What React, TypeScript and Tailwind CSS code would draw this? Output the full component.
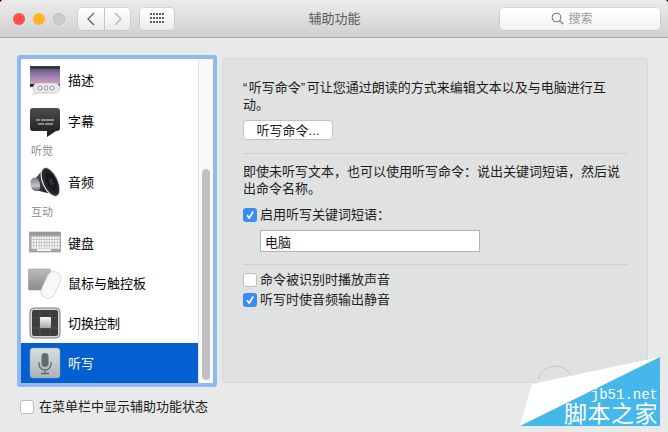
import React from "react";

const font = { fontFamily: '"Liberation Sans","Noto Sans CJK SC",sans-serif' };

function DescIcon() {
  return (
    <svg width="32" height="30" viewBox="0 0 32 30">
      <defs>
        <linearGradient id="dg" x1="0" y1="0" x2="0" y2="1">
          <stop offset="0" stopColor="#5d5a86" />
          <stop offset="0.5" stopColor="#a886b4" />
          <stop offset="1" stopColor="#e0a0b4" />
        </linearGradient>
      </defs>
      <rect x="1" y="1" width="30" height="4" fill="#3a3a3c" />
      <rect x="1" y="4" width="30" height="17" fill="url(#dg)" />
      <rect x="1" y="19" width="30" height="3" fill="#2e2e30" />
      <path d="M9 18h17a5 5 0 0 1 0 10H9l-5 1.500 1.500-3A5 5 0 0 1 9 18z" fill="#e9e9ea" stroke="#b5b5b8" strokeWidth="0.6" />
      <circle cx="11" cy="23" r="2" fill="#fff" stroke="#8d8d92" />
      <circle cx="17" cy="23" r="2" fill="#fff" stroke="#8d8d92" />
      <circle cx="23" cy="23" r="2" fill="#fff" stroke="#8d8d92" />
    </svg>
  );
}

function CaptionIcon() {
  return (
    <svg width="32" height="32" viewBox="0 0 32 32">
      <defs>
        <linearGradient id="cg" x1="0" y1="0" x2="0" y2="1">
          <stop offset="0" stopColor="#4c4c4e" />
          <stop offset="1" stopColor="#1b1b1d" />
        </linearGradient>
      </defs>
      <path d="M4 3h24a3 3 0 0 1 3 3v17a3 3 0 0 1-3 3h-1l-9 6v-6H4a3 3 0 0 1-3-3V6a3 3 0 0 1 3-3z" fill="url(#cg)" />
      <path d="M7 15h4M12 15h13M9 19h6M16 19h8" stroke="#e2e2e2" strokeWidth="1" />
    </svg>
  );
}

function SpeakerIcon() {
  return (
    <svg width="32" height="32" viewBox="0 0 32 32">
      <defs>
        <radialGradient id="sg" cx="0.55" cy="0.5" r="0.6">
          <stop offset="0" stopColor="#3a3c44" />
          <stop offset="0.35" stopColor="#141418" />
          <stop offset="0.8" stopColor="#2c2e35" />
          <stop offset="1" stopColor="#565861" />
        </radialGradient>
        <linearGradient id="sb" x1="0" y1="0" x2="1" y2="1">
          <stop offset="0" stopColor="#55565c" />
          <stop offset="1" stopColor="#111114" />
        </linearGradient>
        <linearGradient id="sm" x1="0" y1="0" x2="0" y2="1">
          <stop offset="0" stopColor="#7c7e84" />
          <stop offset="0.6" stopColor="#c2c3c8" />
          <stop offset="1" stopColor="#5f6066" />
        </linearGradient>
      </defs>
      <path d="M6 13 15 2l13 27-14-3-7-2z" fill="url(#sb)" />
      <path d="M4 12c2-1 5 0 6 3 1.500 3 1.500 7 0 9-1 1.500-4 1.500-6 0-2-2-3-5-2.500-8 .2-2 1.300-3.500 2.500-4z" fill="url(#sm)" />
      <ellipse cx="21.500" cy="16" rx="7.500" ry="15.500" transform="rotate(-25 21.500 16)" fill="url(#sg)" stroke="#e6e6ea" strokeWidth="1.100" />
    </svg>
  );
}

function KeyboardIcon() {
  const keys = [];
  for (let r = 0; r < 4; r++) {
    for (let c = 0; c < 11; c++) {
      keys.push(<rect key={`${r}-${c}`} x={2.5 + c * 2.6} y={5.5 + r * 3.2} width="2.200" height="2.700" fill="#f4f4f4" />);
    }
  }
  return (
    <svg width="32" height="24" viewBox="0 0 32 24">
      <rect x="0.500" y="1" width="31" height="20" fill="#a6a6a8" stroke="#8a8a8c" strokeWidth="0.6" />
      <rect x="1" y="1" width="30" height="3" fill="#98989a" />
      {keys}
      <rect x="8" y="18" width="14" height="2" fill="#f4f4f4" />
    </svg>
  );
}

function MouseIcon() {
  return (
    <svg width="34" height="36" viewBox="0 0 34 36">
      <defs>
        <linearGradient id="tg" x1="0" y1="0" x2="0" y2="1">
          <stop offset="0" stopColor="#bcbcbc" />
          <stop offset="1" stopColor="#8b8b8b" />
        </linearGradient>
      </defs>
      <rect x="0.500" y="4" width="22" height="21" rx="1" fill="url(#tg)" stroke="#8a8a8a" strokeWidth="0.5" />
      <rect x="16" y="6" width="14" height="28" rx="7" transform="rotate(25 23 20)" fill="#f8f8f8" stroke="#cfcfcf" strokeWidth="0.7" />
    </svg>
  );
}

function SwitchIcon() {
  return (
    <svg width="32" height="32" viewBox="0 0 32 32">
      <defs>
        <linearGradient id="wg" x1="0" y1="0" x2="0" y2="1">
          <stop offset="0" stopColor="#fafafa" />
          <stop offset="1" stopColor="#a8a8a8" />
        </linearGradient>
      </defs>
      <rect x="1" y="1" width="30" height="30" rx="4" fill="#d5d5d5" stroke="#7a7a7a" />
      <rect x="3" y="3" width="26" height="26" rx="2" fill="#3d3d3f" />
      <path d="M3 11h26M3 21h26M11 3v26M21 3v26" stroke="#5a5a5c" strokeWidth="0.7" />
      <rect x="11" y="10" width="11" height="11" rx="1" fill="url(#wg)" />
    </svg>
  );
}

function MicIcon() {
  return (
    <svg width="32" height="32" viewBox="0 0 32 32">
      <defs>
        <linearGradient id="mg" x1="0" y1="0" x2="0" y2="1">
          <stop offset="0" stopColor="#d8dfe0" />
          <stop offset="1" stopColor="#a9b4b8" />
        </linearGradient>
      </defs>
      <rect x="1" y="1" width="30" height="30" rx="3" fill="url(#mg)" stroke="#8d999e" strokeWidth="0.5" />
      <rect x="12.500" y="6" width="7" height="14" rx="3.500" fill="#626a70" />
      <path d="M10 15v2a6 6 0 0 0 12 0v-2M16 23v3M12 26.500h8" fill="none" stroke="#626a70" strokeWidth="1.300" />
    </svg>
  );
}

function Row({ icon, label, selected, tall }: { icon: React.ReactNode; label: string; selected?: boolean; tall?: boolean }) {
  return (
    <div className={`flex shrink-0 items-center ${tall ? "h-[42px]" : "h-10"} ${selected ? "bg-[#045fd0] text-white" : "text-black"}`}>
      <div className="flex w-[47px] shrink-0 items-center justify-center pl-px">{icon}</div>
      <span className="pt-px text-[13px]">{label}</span>
    </div>
  );
}

function Header({ label }: { label: string }) {
  return <div className="flex h-[21px] shrink-0 items-center pl-[10px] text-[11px] text-[#8c8c8c]">{label}</div>;
}

function Check({ checked }: { checked?: boolean }) {
  if (checked) {
    return (
      <span className="flex h-[14px] w-[14px] shrink-0 items-center justify-center rounded-[3px] bg-[#3b8bf4]">
        <svg width="10" height="10" viewBox="0 0 10 10">
          <path d="M2 5.200 4.200 8 8.200 1.500" fill="none" stroke="#fff" strokeWidth="1.600" />
        </svg>
      </span>
    );
  }
  return <span className="h-[14px] w-[14px] shrink-0 rounded-[3px] border border-[#bdbdbd] bg-white" />;
}

function Option({ checked, label, className }: { checked?: boolean; label: string; className?: string }) {
  return (
    <label className={`flex h-5 items-center gap-[3px] text-[13px] text-[#1c1c1c] ${className ?? ""}`}>
      <Check checked={checked} />
      <span>{label}</span>
    </label>
  );
}

function Sep() {
  return <div className="h-px bg-[#cdcfcf]" />;
}

export default function App() {
  return (
    <div className="relative h-[432px] w-[668px] overflow-hidden bg-black" style={font}>
      <div className="flex h-full flex-col overflow-hidden rounded-t-[4px] bg-[#e8e9e9]">
        <header className="flex h-[38px] shrink-0 items-center border-b border-[#a9a9a9] bg-gradient-to-b from-[#ebebeb] to-[#d0d0d0] pl-[13px] pr-2">
          <div className="flex items-center gap-2">
            <span className="h-3 w-3 rounded-full bg-[#fc4f4c]" />
            <span className="h-3 w-3 rounded-full bg-[#fdb426]" />
            <span className="h-3 w-3 rounded-full border border-[#bdbdbd] bg-[#cdcdcd]" />
          </div>
          <div className="ml-[13px] flex h-[22px] gap-px">
            <button className="flex w-[26px] items-center justify-center rounded-l-[4px] bg-gradient-to-b from-white to-[#ececec] shadow-[0_0_0_0.5px_#bdbdbd]">
              <svg width="10" height="14" viewBox="0 0 10 14"><path d="M8 1 2 7l6 6" fill="none" stroke="#666" strokeWidth="1.400" /></svg>
            </button>
            <button className="flex w-[25px] items-center justify-center rounded-r-[4px] bg-gradient-to-b from-white to-[#ececec] shadow-[0_0_0_0.5px_#bdbdbd]">
              <svg width="10" height="14" viewBox="0 0 10 14"><path d="m2 1 6 6-6 6" fill="none" stroke="#b5b5b5" strokeWidth="1.400" /></svg>
            </button>
          </div>
          <button className="ml-[10px] flex h-[22px] w-[34px] items-center justify-center rounded-[4px] bg-gradient-to-b from-white to-[#ececec] shadow-[0_0_0_0.5px_#bdbdbd]">
            <svg width="15" height="11" viewBox="0 0 15 11" fill="#5f5f5f">
              {[0, 4, 8].map((y) =>
                [0, 3, 6, 9, 12].map((x) => <rect key={`${x}-${y}`} x={x} y={y} width="2" height="2" />)
              )}
            </svg>
          </button>
          <div className="flex-1 pr-[5px] text-center text-[13px] text-[#5c5c5c]">辅助功能</div>
          <div className="flex h-[22px] w-40 items-center justify-center gap-1 rounded-[4px] bg-gradient-to-b from-white to-[#f2f2f2] pr-4 text-[12px] text-[#9a9a9a] shadow-[0_0_0_0.5px_#bdbdbd]">
            <svg width="13" height="13" viewBox="0 0 13 13"><circle cx="5.500" cy="5.500" r="4.300" fill="none" stroke="#7c7c7c" strokeWidth="1.100" /><path d="m8.700 8.700 3.500 3.500" stroke="#7c7c7c" strokeWidth="1.300" /></svg>
            <span>搜索</span>
          </div>
        </header>

        <main className="flex items-start pl-[17px] pt-[17px]">
          <aside className="flex h-[332px] w-[200px] shrink-0 overflow-hidden rounded-[3px] border-4 border-[#8fb9f0] bg-white">
            <div className="flex w-[177px] flex-col overflow-hidden">
              <Row tall icon={<DescIcon />} label="描述" />
              <Row icon={<CaptionIcon />} label="字幕" />
              <Header label="听觉" />
              <Row icon={<SpeakerIcon />} label="音频" />
              <Header label="互动" />
              <Row icon={<KeyboardIcon />} label="键盘" />
              <Row icon={<MouseIcon />} label="鼠标与触控板" />
              <Row icon={<SwitchIcon />} label="切换控制" />
              <Row selected icon={<MicIcon />} label="听写" />
            </div>
            <div className="flex w-[15px] flex-col border-l border-[#e3e3e3] bg-[#fafafa] pl-[3px] pr-[3px] pt-[110px] pb-[3px]">
              <div className="flex-1 rounded-full bg-[#c0c0c0]" />
            </div>
          </aside>

          <section className="ml-[5px] mt-[3px] h-[325px] w-[426px] rounded-[4px] border border-[#d8d9d9] bg-[#e0e1e1] pl-5 pr-[19px] pt-[20px]">
            <p className="text-[13px] leading-[17px] text-[#1c1c1c]">
              <span className="tracking-[1.5px]">“</span>听写命令<span className="tracking-[1.5px]">”</span>可让您通过朗读的方式来编辑文本以及与电脑进行互动。
            </p>
            <button className="mt-[7px] block h-5 w-[90px] rounded-[4px] border border-[#c4c4c4] bg-white text-[13px] leading-none text-[#1c1c1c]">
              听写命令...
            </button>
            <div className="mt-[13px]"><Sep /></div>
            <p className="mt-[9px] text-[13px] leading-[17px] text-[#1c1c1c]">
              即使未听写文本，也可以使用听写命令：说出关键词短语，然后说出命令名称。
            </p>
            <Option checked label="启用听写关键词短语：" className="mt-[8px]" />
            <input
              readOnly
              value="电脑"
              className="mt-[5px] ml-[17px] block h-[22px] w-[220px] border border-[#b4b4b4] bg-white px-1 text-[13px] text-[#1c1c1c] outline-none"
            />
            <div className="mt-[12px]"><Sep /></div>
            <Option label="命令被识别时播放声音" className="mt-[5px]" />
            <Option checked label="听写时使音频输出静音" />
          </section>
        </main>

        <label className="ml-5 mt-[10px] flex items-center gap-[5px] text-[13px] text-[#1c1c1c]">
          <Check />
          <span>在菜单栏中显示辅助功能状态</span>
        </label>
      </div>

      <div className="absolute bottom-[5px] right-2 h-[70px] w-[140px]">
        <svg className="absolute inset-0" width="140" height="70" viewBox="0 0 140 70">
          <polygon points="0,69 12,27 140,0" fill="#ffffff" />
          <polygon points="140,0 140,69 0,69" fill="#45b7ea" />
          <path d="M18 22a18 18 0 0 1 32-5" fill="none" stroke="#c4c4c4" strokeWidth="1" />
        </svg>
        <div className="absolute right-[2px] top-[31px] font-['Liberation_Mono',monospace] text-[14px] leading-[14px] text-white">jb51.net</div>
        <div className="absolute right-[2px] top-[46px] text-[23px] leading-[22px] tracking-[0.5px] text-white">脚本之家</div>
      </div>
    </div>
  );
}
